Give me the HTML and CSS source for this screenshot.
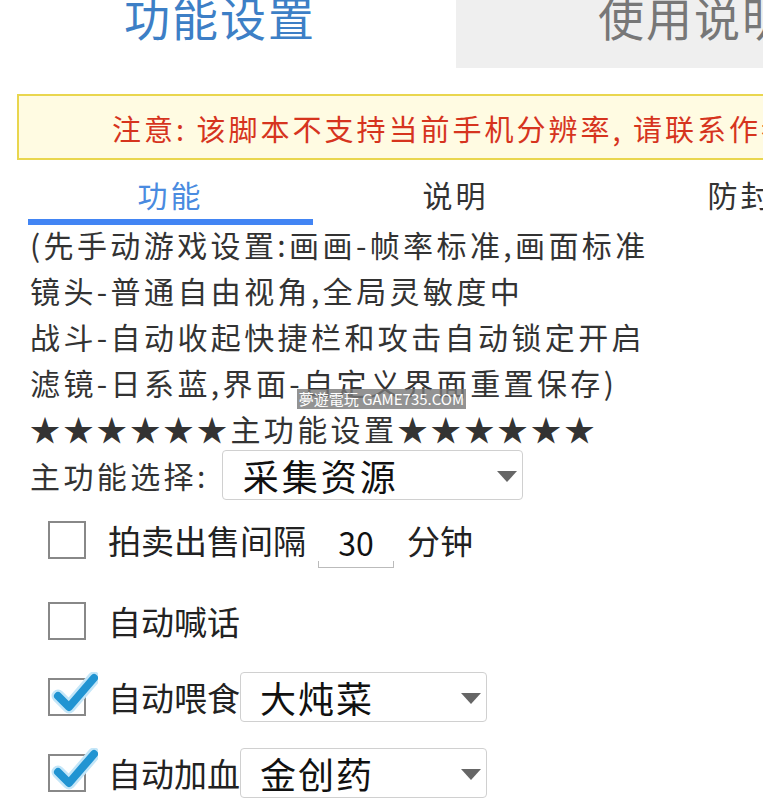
FILE: index.html
```html
<!DOCTYPE html>
<html lang="zh-CN">
<head>
    <meta charset="UTF-8">
    <meta name="viewport" content="width=device-width, initial-scale=1.0">
    <title>功能设置</title>
    <link rel="stylesheet" href="styles.css">
</head>
<body>

    <!-- Top tabs -->
    <div class="top-tabs">
        <div class="top-tab active"><span>功能设置</span></div>
        <div class="top-tab"><span>使用说明</span></div>
    </div>

    <div class="notice">注意: 该脚本不支持当前手机分辨率, 请联系作者</div>

    <!-- Sub tabs -->
    <div class="sub-tabs">
        <div class="sub-tab active">功能</div>
        <div class="sub-tab">说明</div>
        <div class="sub-tab">防封</div>
    </div>

    <div class="intro">
        <div>(先手动游戏设置:画画-帧率标准,画面标准</div>
        <div>镜头-普通自由视角,全局灵敏度中</div>
        <div>战斗-自动收起快捷栏和攻击自动锁定开启</div>
        <div>滤镜-日系蓝,界面-自定义界面重置保存)</div>
        <div>★★★★★★主功能设置★★★★★★</div>
        <div class="watermark">夢遊電玩 GAME735.COM</div>
    </div>

    <div class="main-select">
        <span>主功能选择:</span>
        <div class="select wide">采集资源<i class="arrow"></i></div>
    </div>

    <div class="options">
        <div class="option first">
            <span class="checkbox"></span>
            <span class="label">拍卖出售间隔</span>
            <span class="num-input">30</span>
            <span class="label">分钟</span>
        </div>
        <div class="option">
            <span class="checkbox"></span>
            <span class="label">自动喊话</span>
        </div>
        <div class="option">
            <span class="checkbox checked">
                <svg class="tick" width="48" height="44" viewBox="0 0 48 44"><path d="M8 24 L19 35 L44 6" fill="none" stroke="#c4e6f8" stroke-width="13" stroke-linecap="round" stroke-linejoin="round"/><path d="M8 24 L19 35 L44 6" fill="none" stroke="#2194d2" stroke-width="8" stroke-linecap="round" stroke-linejoin="round"/></svg>
            </span>
            <span class="label">自动喂食</span>
            <div class="select">大炖菜<i class="arrow"></i></div>
        </div>
        <div class="option">
            <span class="checkbox checked">
                <svg class="tick" width="48" height="44" viewBox="0 0 48 44"><path d="M8 24 L19 35 L44 6" fill="none" stroke="#c4e6f8" stroke-width="13" stroke-linecap="round" stroke-linejoin="round"/><path d="M8 24 L19 35 L44 6" fill="none" stroke="#2194d2" stroke-width="8" stroke-linecap="round" stroke-linejoin="round"/></svg>
            </span>
            <span class="label">自动加血</span>
            <div class="select">金创药<i class="arrow"></i></div>
        </div>
    </div>

</body>
</html>
```

FILE: styles.css
```css
body {
    margin: 0;
    font-family: "Noto Sans CJK SC", "Noto Sans", sans-serif;
    background-color: #ffffff;
    color: #333;
    overflow: hidden;
}
/* Top tabs */
.top-tabs {
    display: flex;
    height: 68px;
}
.top-tab {
    font-size: 46px;
    line-height: 48px;
    letter-spacing: 2px;
    color: #777;
    background-color: #efefef;
    flex: 1;
    padding-left: 142px;
    white-space: nowrap;
    overflow: hidden;
}
.top-tab span {
    display: block;
    margin-top: -8px;
}
.top-tab.active {
    flex: 0 0 456px;
    padding-left: 124px;
    box-sizing: border-box;
    background-color: #fff;
    color: #3d7fc6;
}
/* Notice */
.notice {
    margin: 26px 0 0 17px;
    height: 62px;
    line-height: 64px;
    border: 2px solid #e9d64e;
    border-right: none;
    background-color: #fffbe2;
    color: #d6341e;
    font-size: 29px;
    letter-spacing: 3px;
    padding-left: 93px;
    white-space: nowrap;
    overflow: hidden;
}
/* Sub tabs */
.sub-tabs {
    display: flex;
    margin-left: 28px;
    white-space: nowrap;
}
.sub-tab {
    flex: 0 0 285px;
    height: 53px;
    padding-top: 12px;
    line-height: 45px;
    font-size: 30px;
    letter-spacing: 3px;
    text-align: center;
    color: #333;
}
.sub-tab.active {
    color: #4a8be0;
    height: 47px;
    border-bottom: 6px solid #4285f4;
}
/* Intro text */
.intro {
    position: relative;
    margin: -4px 0 0 30px;
    font-size: 30px;
    letter-spacing: 3.4px;
    line-height: 46px;
    color: #333;
    white-space: nowrap;
}
.watermark {
    position: absolute;
    left: 267px;
    top: 168px;
    width: 169px;
    height: 20px;
    line-height: 20px;
    font-size: 15px;
    letter-spacing: 0;
    font-family: "Noto Sans CJK TC", sans-serif;
    text-align: center;
    color: #fff;
    background-color: rgba(120, 120, 120, 0.8);
}
/* Selects */
.main-select {
    display: flex;
    align-items: center;
    margin: -1px 0 0 30px;
    font-size: 30px;
    letter-spacing: 3.4px;
    color: #333;
}
.select {
    position: relative;
    height: 48px;
    line-height: 48px;
    border: 1px solid #d0d0d0;
    border-radius: 4px;
    font-size: 36px;
    letter-spacing: 2px;
    color: #111;
    padding-left: 19px;
    width: 226px;
}
.select.wide {
    width: 279px;
    margin-left: 13px;
    padding-left: 20px;
    letter-spacing: 3px;
}
.arrow {
    position: absolute;
    right: 5px;
    top: 20px;
    width: 0;
    height: 0;
    border-left: 10px solid transparent;
    border-right: 10px solid transparent;
    border-top: 11px solid #666;
}
/* Options */
.options {
    margin: 15px 0 0 48px;
    display: flex;
    flex-direction: column;
    gap: 26px;
}
.option {
    display: flex;
    align-items: center;
    height: 50px;
    font-size: 33px;
    color: #222;
}
.option.first {
    margin-bottom: 5px;
}
.checkbox {
    position: relative;
    width: 34px;
    height: 34px;
    border: 2px solid #888;
    background-color: #fff;
    margin-right: 22px;
    flex: none;
}
.tick {
    position: absolute;
    left: 0;
    top: -8px;
}
.num-input {
    position: relative;
    width: 76px;
    margin: 0 13px 0 12px;
    text-align: center;
    font-size: 32px;
    color: #111;
    line-height: 50px;
    top: 2px;
    height: 50px;
    border-bottom: 1px solid #bbb;
}
.num-input::before,
.num-input::after {
    content: "";
    position: absolute;
    bottom: 0;
    width: 1px;
    height: 6px;
    background-color: #bbb;
}
.num-input::before { left: 0; }
.num-input::after { right: 0; }
```
